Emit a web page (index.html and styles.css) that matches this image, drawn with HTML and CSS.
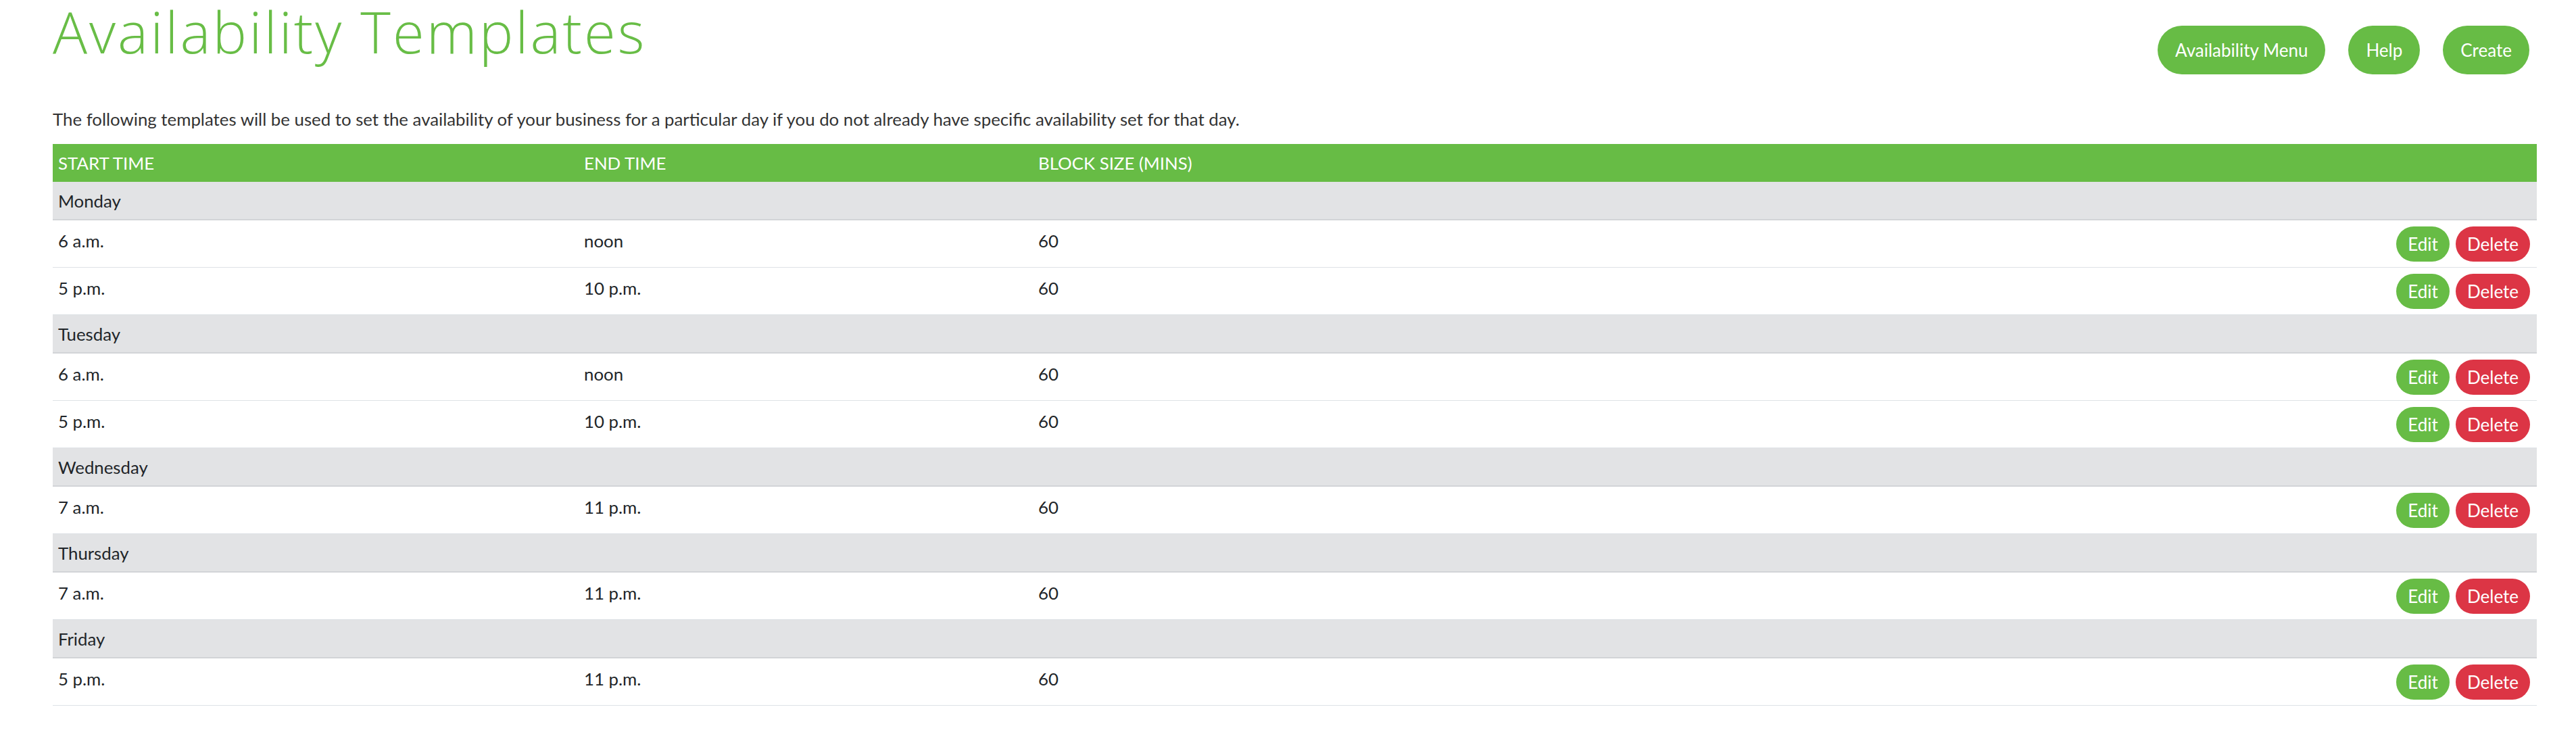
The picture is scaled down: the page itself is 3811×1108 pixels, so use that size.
FILE: index.html
```html
<!DOCTYPE html>
<html lang="en">
<head>
<meta charset="utf-8">
<title>Availability Templates</title>
<link rel="stylesheet" href="styles.css">
</head>
<body>
<div class="page">
  <header class="page-header">
    <h1 class="title">Availability Templates</h1>
    <div class="header-actions">
      <a class="pill-btn" href="#">Availability Menu</a>
      <a class="pill-btn" href="#">Help</a>
      <a class="pill-btn" href="#">Create</a>
    </div>
  </header>
  <p class="intro">The following templates will be used to set the availability of your business for a particular day if you do not already have specific availability set for that day.</p>
  <table class="templates">
    <colgroup>
      <col class="col-start">
      <col class="col-end">
      <col class="col-block">
      <col class="col-actions">
    </colgroup>
    <thead>
      <tr><th>Start Time</th><th>End Time</th><th>Block Size (mins)</th><th></th></tr>
    </thead>
    <tbody>
      <tr class="day"><td colspan="4">Monday</td></tr>
      <tr class="slot"><td>6 a.m.</td><td>noon</td><td>60</td><td class="actions"><a class="btn btn-edit" href="#">Edit</a><a class="btn btn-delete" href="#">Delete</a></td></tr>
      <tr class="slot"><td>5 p.m.</td><td>10 p.m.</td><td>60</td><td class="actions"><a class="btn btn-edit" href="#">Edit</a><a class="btn btn-delete" href="#">Delete</a></td></tr>
      <tr class="day"><td colspan="4">Tuesday</td></tr>
      <tr class="slot"><td>6 a.m.</td><td>noon</td><td>60</td><td class="actions"><a class="btn btn-edit" href="#">Edit</a><a class="btn btn-delete" href="#">Delete</a></td></tr>
      <tr class="slot"><td>5 p.m.</td><td>10 p.m.</td><td>60</td><td class="actions"><a class="btn btn-edit" href="#">Edit</a><a class="btn btn-delete" href="#">Delete</a></td></tr>
      <tr class="day"><td colspan="4">Wednesday</td></tr>
      <tr class="slot"><td>7 a.m.</td><td>11 p.m.</td><td>60</td><td class="actions"><a class="btn btn-edit" href="#">Edit</a><a class="btn btn-delete" href="#">Delete</a></td></tr>
      <tr class="day"><td colspan="4">Thursday</td></tr>
      <tr class="slot"><td>7 a.m.</td><td>11 p.m.</td><td>60</td><td class="actions"><a class="btn btn-edit" href="#">Edit</a><a class="btn btn-delete" href="#">Delete</a></td></tr>
      <tr class="day"><td colspan="4">Friday</td></tr>
      <tr class="slot"><td>5 p.m.</td><td>11 p.m.</td><td>60</td><td class="actions"><a class="btn btn-edit" href="#">Edit</a><a class="btn btn-delete" href="#">Delete</a></td></tr>
    </tbody>
  </table>
</div>
</body>
</html>
```

FILE: styles.css
```css
html, body {
  margin: 0;
  padding: 0;
  background: #ffffff;
}

body {
  font-family: "Lato", "Open Sans", "Liberation Sans", sans-serif;
  font-size: 25.8px;
  line-height: 36px;
  color: #212529;
}

.page {
  padding: 0 58px 40px 78px;
}

.page-header {
  display: flex;
  justify-content: space-between;
  align-items: flex-start;
  padding-top: 3px;
}

.title {
  margin: 0;
  font-family: "Open Sans", "Lato", sans-serif;
  font-weight: 300;
  font-size: 85px;
  line-height: 86px;
  letter-spacing: 3px;
  color: #68bd46;
}

.header-actions {
  display: flex;
  gap: 34px;
  margin-top: 35px;
  margin-right: 11px;
}

.pill-btn {
  display: block;
  padding: 18px 26px;
  border-radius: 36px;
  background: #67bc45;
  color: #ffffff;
  text-decoration: none;
  font-size: 26px;
  line-height: 36px;
}

.intro {
  margin: 48px 0 19px;
  color: #333333;
}

.templates {
  width: 100%;
  border-collapse: collapse;
  table-layout: fixed;
}

.col-start { width: 778px; }
.col-end { width: 672px; }
.col-block { width: 1200px; }

.templates th {
  background: #67bc45;
  color: #ffffff;
  font-weight: normal;
  text-align: left;
  text-transform: uppercase;
  padding: 10px 8px;
}

.day td {
  background: #e2e3e5;
  padding: 10px 8px 9px;
  border-bottom: 2px solid #d2d4d7;
}

.slot td {
  padding: 12px 8px;
  vertical-align: top;
  border-bottom: 1px solid #dee2e6;
}

.slot td.actions {
  padding: 9px 10px 8px;
  text-align: right;
  white-space: nowrap;
}

.btn {
  display: inline-block;
  padding: 8px 17px;
  border-radius: 26px;
  color: #ffffff;
  text-decoration: none;
  font-size: 26px;
  line-height: 36px;
}

.btn + .btn {
  margin-left: 9px;
}

.btn-edit {
  background: #67bc45;
}

.btn-delete {
  background: #dc3545;
}
```
